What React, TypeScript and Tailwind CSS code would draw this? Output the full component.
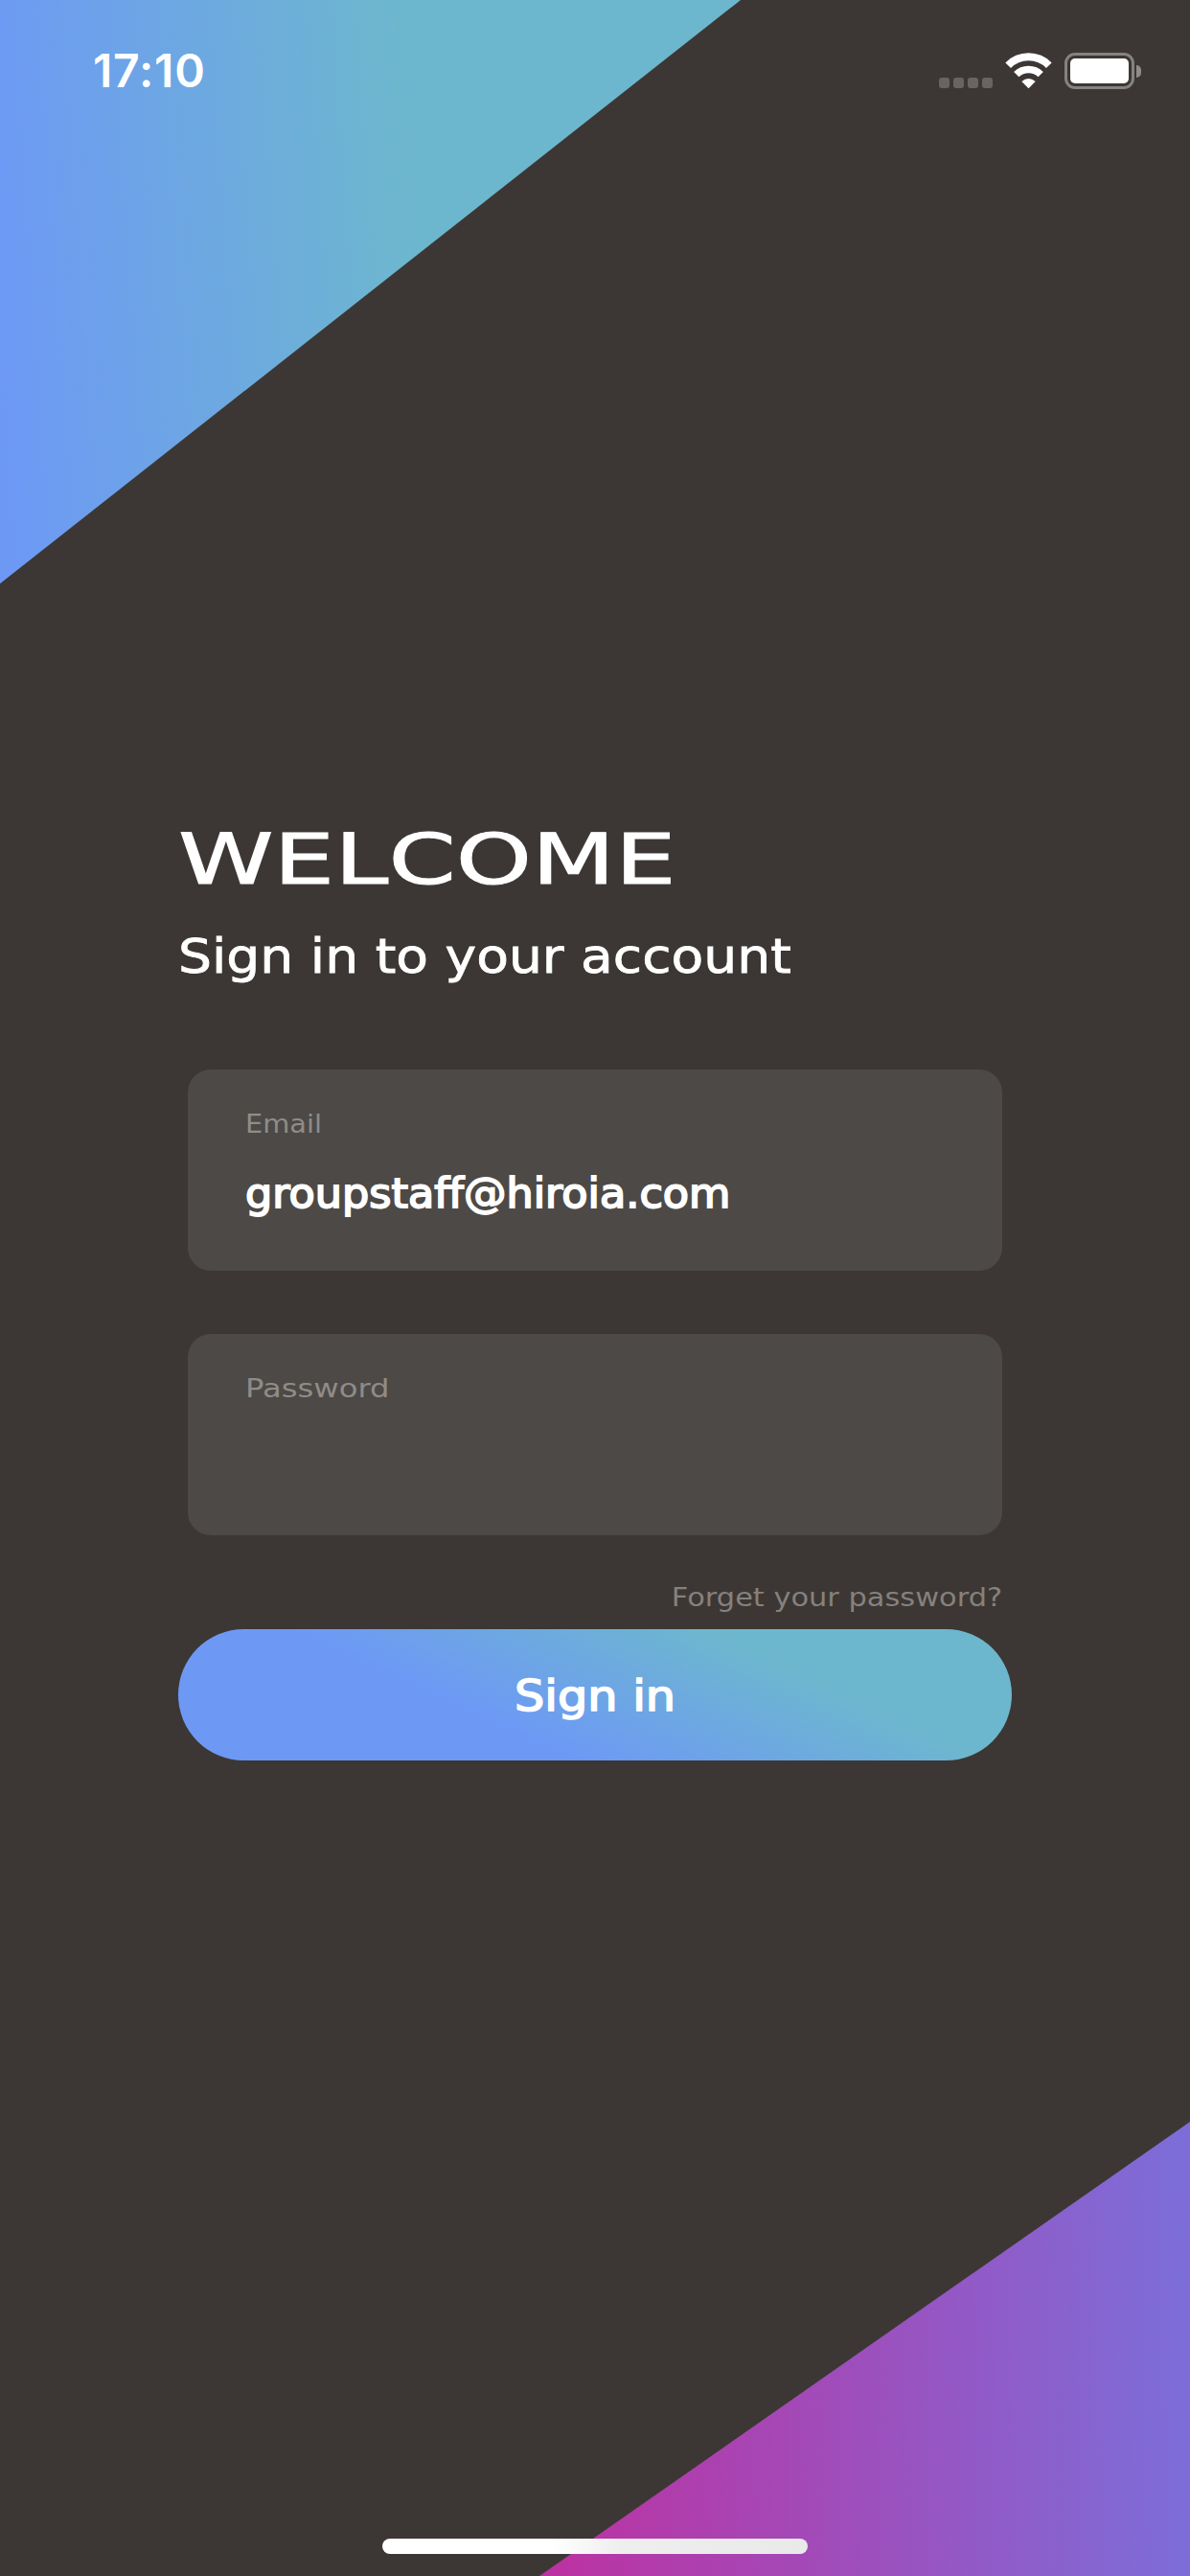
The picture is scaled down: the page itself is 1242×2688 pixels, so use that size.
import { useState } from "react"

function SignalDots() {
    return (
        <div className="flex gap-[4px]">
            {[0, 1, 2, 3].map((dot) => (
                <span key={dot} className="w-[11px] h-[11px] rounded-[3px] bg-[#686462]" />
            ))}
        </div>
    )
}

function WifiIcon() {
    return (
        <svg className="w-[49px] h-[38px]" viewBox="0 0 49 38" fill="none">
            <path d="M3.2 13.2A30 30 0 0 1 45.8 13.2" stroke="#fff" strokeWidth="8" />
            <path d="M11.8 22.6A18.2 18.2 0 0 1 37.2 22.6" stroke="#fff" strokeWidth="7.6" />
            <path d="M24.5 37.3L17.3 30.1Q24.5 23.7 31.7 30.1Z" fill="#fff" />
        </svg>
    )
}

function BatteryIcon() {
    return (
        <div className="flex items-center gap-[2px]">
            <div className="w-[73px] h-[38px] p-[3px] rounded-[11px] border-[3px] border-[#86827f]">
                <div className="h-full rounded-[5px] bg-white" />
            </div>
            <div className="w-[5px] h-[13px] rounded-r-full bg-[#8f8c8a]" />
        </div>
    )
}

function StatusBar() {
    return (
        <div className="flex justify-between h-[93px] pl-[97px] pr-[51px]">
            <span className="pt-[49px] font-['Inter'] text-[48px] leading-[50px] font-semibold tracking-[0.8px]">
                17:10
            </span>
            <div className="flex items-end">
                <div className="pb-px">
                    <SignalDots />
                </div>
                <div className="ml-[13px]">
                    <WifiIcon />
                </div>
                <div className="ml-[13px]">
                    <BatteryIcon />
                </div>
            </div>
        </div>
    )
}

export default function App() {
    const [email, setEmail] = useState("groupstaff@hiroia.com")
    const [password, setPassword] = useState("")

    return (
        <div className="relative w-[1242px] h-[2688px] overflow-hidden bg-[#3c3734] font-['DejaVu_Sans',sans-serif] text-white">
            {/* Corner decorations */}
            <div className="absolute top-0 left-0 w-[773px] h-[609px] bg-[linear-gradient(86deg,#6d99f5_2%,#6db7ce_56%)] [clip-path:polygon(0_0,100%_0,0_100%)]" />
            <div className="absolute bottom-0 right-0 w-[679px] h-[474px] bg-[linear-gradient(89deg,#bc32a2_2%,#7d6dd8_98%)] [clip-path:polygon(100%_0,100%_100%,0_100%)]" />

            <div className="relative flex flex-col h-full">
                <StatusBar />

                <main className="flex flex-col mt-[759px] mx-[186px]">
                    {/* Heading */}
                    <h1 className="h-[90px] text-[73px] leading-[90px] whitespace-nowrap origin-left scale-x-[1.38] [-webkit-text-stroke:1px_white]">
                        WELCOME
                    </h1>
                    <h2 className="h-[60px] mt-[26px] text-[50px] leading-[60px] whitespace-nowrap origin-left scale-x-[1.103] [-webkit-text-stroke:0.8px_white]">
                        Sign in to your account
                    </h2>

                    {/* Fields */}
                    <label className="flex flex-col h-[210px] mx-[10px] mt-[88px] pt-[42px] px-[60px] rounded-[24px] bg-[#4d4946]">
                        <span className="text-[26px] leading-[30px] text-[#8f8c89] origin-left scale-x-[1.11]">Email</span>
                        <input
                            className="w-full h-[56px] mt-[29px] bg-transparent outline-none text-[42px] origin-left scale-x-[1.06] [-webkit-text-stroke:1.8px_white]"
                            value={email}
                            onChange={(e) => setEmail(e.target.value)}
                        />
                    </label>
                    <label className="flex flex-col h-[210px] mx-[10px] mt-[66px] pt-[42px] px-[60px] rounded-[24px] bg-[#4d4946]">
                        <span className="text-[26px] leading-[30px] text-[#8f8c89] origin-left scale-x-[1.24]">Password</span>
                        <input
                            type="password"
                            className="w-full h-[56px] mt-[29px] bg-transparent outline-none text-[42px]"
                            value={password}
                            onChange={(e) => setPassword(e.target.value)}
                        />
                    </label>

                    <a className="self-end h-[36px] mt-[47px] mr-[10px] text-[26px] leading-[36px] text-[#85817e] origin-right scale-x-[1.17]">
                        Forget your password?
                    </a>
                    <button className="flex items-center justify-center h-[137px] mt-[15px] rounded-full bg-[linear-gradient(25deg,#6d99f5_36%,#6db7ce_73%)] text-[44px]">
                        <span className="pt-[2px] scale-x-[1.12] [-webkit-text-stroke:1.6px_white]">Sign in</span>
                    </button>
                </main>

                {/* Home indicator */}
                <div className="self-center w-[444px] h-[16px] mt-auto mb-[23px] rounded-full bg-[linear-gradient(90deg,#fff_40%,#eee_56%,#e9e9e9)]" />
            </div>
        </div>
    )
}
